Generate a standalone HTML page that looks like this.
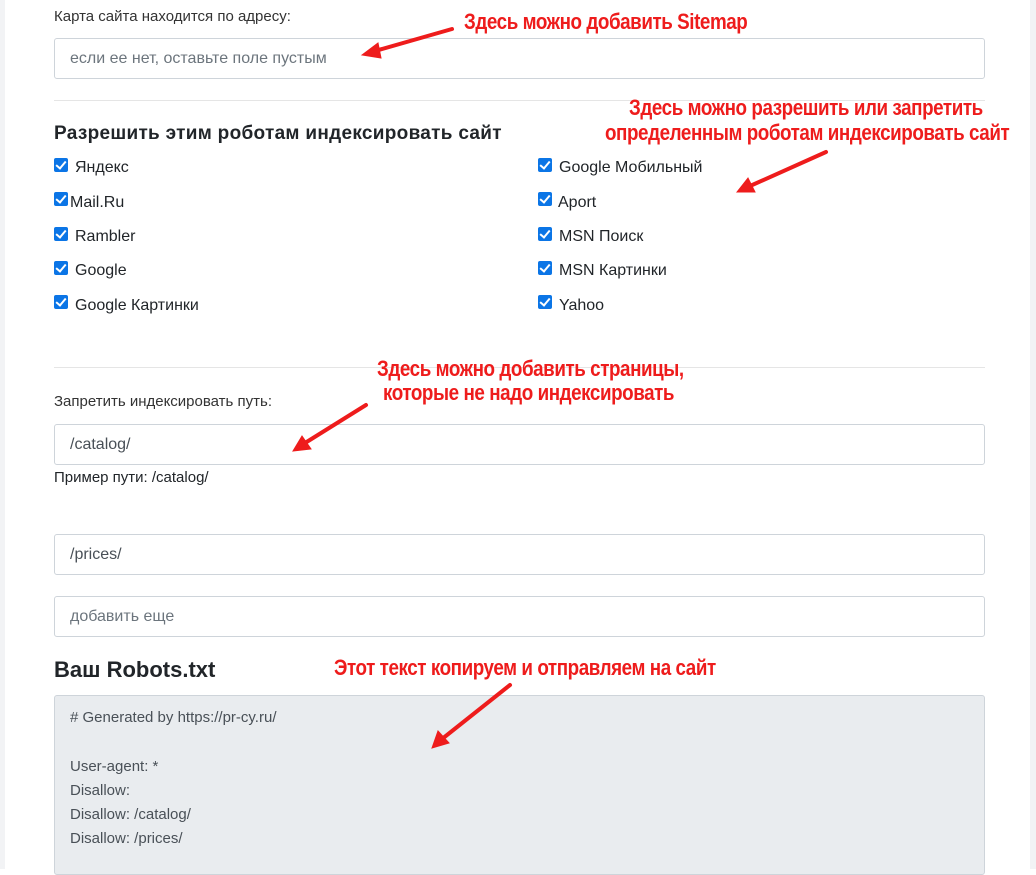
<!DOCTYPE html><html><head><meta charset="utf-8"><style>
body{margin:0;width:1036px;height:869px;position:relative;overflow:hidden;background:#fff;font-family:"Liberation Sans",sans-serif;color:#212529}
.a{position:absolute;white-space:nowrap}
.inp{position:absolute;left:54px;width:931px;height:41px;border:1px solid #ced4da;border-radius:3px;background:#fff;box-sizing:border-box;padding-left:15px;line-height:39px;font-size:16px;color:#495057}
.ph{color:#6c757d}
.hr{position:absolute;left:54px;width:931px;height:1px;background:#e5e5e5}
.cb{position:absolute;width:14px;height:14px;background:#0b75e6;border-radius:2px}
.cb:after{content:"";position:absolute;left:4px;top:1px;width:4px;height:8px;border:solid #fff;border-width:0 2px 2px 0;transform:rotate(40deg)}
.l{font-size:16px}
.r{position:absolute;white-space:nowrap;color:#ee1c1c;font-weight:bold;font-size:22px;transform-origin:0 0;transform:scaleX(.855);letter-spacing:-.5px}
</style></head><body>
<div class="a" style="left:0;top:0;width:5px;height:869px;background:#f2f3f5"></div>
<div class="a" style="left:1030px;top:0;width:6px;height:869px;background:#f2f3f5"></div>
<div class="a l" style="left:54px;top:8px;font-size:15px;color:#333">Карта сайта находится по адресу:</div>
<div class="inp ph" style="top:38px">если ее нет, оставьте поле пустым</div>
<div class="hr" style="top:100px"></div>
<div class="a" style="left:54px;top:123px;font-size:19px;font-weight:bold;letter-spacing:.3px">Разрешить этим роботам индексировать сайт</div>
<div class="cb" style="left:54px;top:158px"></div><div class="a l" style="left:75px;top:159px">Яндекс</div>
<div class="cb" style="left:54px;top:192px"></div><div class="a l" style="left:70px;top:194px">Mail.Ru</div>
<div class="cb" style="left:54px;top:227px"></div><div class="a l" style="left:75px;top:228px">Rambler</div>
<div class="cb" style="left:54px;top:261px"></div><div class="a l" style="left:75px;top:262px">Google</div>
<div class="cb" style="left:54px;top:295px"></div><div class="a l" style="left:75px;top:297px">Google Картинки</div>
<div class="cb" style="left:538px;top:158px"></div><div class="a l" style="left:559px;top:159px">Google Мобильный</div>
<div class="cb" style="left:538px;top:192px"></div><div class="a l" style="left:558px;top:194px">Aport</div>
<div class="cb" style="left:538px;top:227px"></div><div class="a l" style="left:559px;top:228px">MSN Поиск</div>
<div class="cb" style="left:538px;top:261px"></div><div class="a l" style="left:559px;top:262px">MSN Картинки</div>
<div class="cb" style="left:538px;top:295px"></div><div class="a l" style="left:559px;top:297px">Yahoo</div>
<div class="hr" style="top:367px"></div>
<div class="a" style="left:54px;top:393px;font-size:15px;color:#333">Запретить индексировать путь:</div>
<div class="inp" style="top:424px">/catalog/</div>
<div class="a" style="left:54px;top:469px;font-size:15px">Пример пути: /catalog/</div>
<div class="inp" style="top:534px">/prices/</div>
<div class="inp ph" style="top:596px">добавить еще</div>
<div class="a" style="left:54px;top:657px;font-size:22px;font-weight:bold">Ваш Robots.txt</div>
<div class="a" style="left:54px;top:695px;width:931px;height:180px;background:#e9ecef;border:1px solid #ced4da;border-radius:3px;box-sizing:border-box;padding:10px 15px;font-size:15px;line-height:24.3px;color:#495057;white-space:pre"># Generated by https://pr-cy.ru/

User-agent: *
Disallow:
Disallow: /catalog/
Disallow: /prices/</div>
<div class="r" style="left:464px;top:9px">Здесь можно добавить Sitemap</div>
<div class="r" style="left:629px;top:95px">Здесь можно разрешить или запретить</div>
<div class="r" style="left:605px;top:120px">определенным роботам индексировать сайт</div>
<div class="r" style="left:377px;top:356px">Здесь можно добавить страницы,</div>
<div class="r" style="left:383px;top:380px">которые не надо индексировать</div>
<div class="r" style="left:334px;top:655px">Этот текст копируем и отправляем на сайт</div>
<svg class="a" style="left:0;top:0" width="1036" height="869">
<g stroke="#ee1c1c" stroke-width="4" stroke-linecap="round" fill="#ee1c1c">
<line x1="452" y1="29" x2="375" y2="51"/><polygon points="362,55 378,43 381,58" stroke-width="1"/>
<line x1="826" y1="152" x2="750" y2="186"/><polygon points="737,192 748,178 755,192" stroke-width="1"/>
<line x1="366" y1="405" x2="305" y2="443"/><polygon points="293,451 302,436 311,449" stroke-width="1"/>
<line x1="510" y1="685" x2="442" y2="739"/><polygon points="432,748 438,731 449,743" stroke-width="1"/>
</g></svg>
</body></html>
